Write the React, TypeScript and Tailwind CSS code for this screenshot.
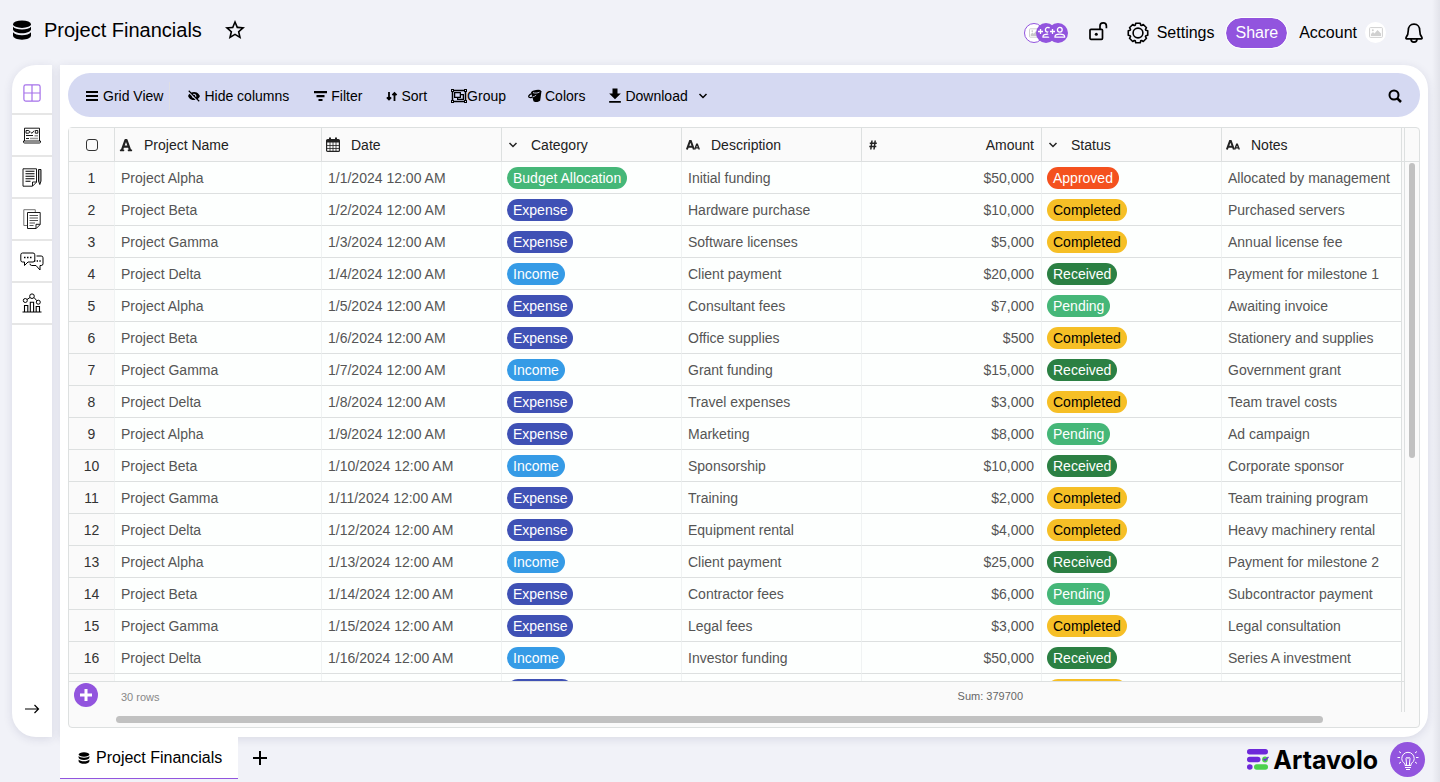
import type { ReactNode } from 'react'
import { BiSolidHide } from 'react-icons/bi'
import { FaFont, FaRegObjectGroup } from 'react-icons/fa'
import { MdDownload, MdStarOutline } from 'react-icons/md'

type Row = {
  project: string
  category: string
  description: string
  amount: string
  status: string
  notes: string
}

const projects = ['Project Alpha', 'Project Beta', 'Project Gamma', 'Project Delta']

const entries: [number, string, string, string, string, string][] = [
  [0, 'Budget Allocation', 'Initial funding', '$50,000', 'Approved', 'Allocated by management'],
  [1, 'Expense', 'Hardware purchase', '$10,000', 'Completed', 'Purchased servers'],
  [2, 'Expense', 'Software licenses', '$5,000', 'Completed', 'Annual license fee'],
  [3, 'Income', 'Client payment', '$20,000', 'Received', 'Payment for milestone 1'],
  [0, 'Expense', 'Consultant fees', '$7,000', 'Pending', 'Awaiting invoice'],
  [1, 'Expense', 'Office supplies', '$500', 'Completed', 'Stationery and supplies'],
  [2, 'Income', 'Grant funding', '$15,000', 'Received', 'Government grant'],
  [3, 'Expense', 'Travel expenses', '$3,000', 'Completed', 'Team travel costs'],
  [0, 'Expense', 'Marketing', '$8,000', 'Pending', 'Ad campaign'],
  [1, 'Income', 'Sponsorship', '$10,000', 'Received', 'Corporate sponsor'],
  [2, 'Expense', 'Training', '$2,000', 'Completed', 'Team training program'],
  [3, 'Expense', 'Equipment rental', '$4,000', 'Completed', 'Heavy machinery rental'],
  [0, 'Income', 'Client payment', '$25,000', 'Received', 'Payment for milestone 2'],
  [1, 'Expense', 'Contractor fees', '$6,000', 'Pending', 'Subcontractor payment'],
  [2, 'Expense', 'Legal fees', '$3,000', 'Completed', 'Legal consultation'],
  [3, 'Income', 'Investor funding', '$50,000', 'Received', 'Series A investment'],
  [0, 'Expense', '', '', 'Completed', ''],
]

const rows: Row[] = entries.map(([p, category, description, amount, status, notes]) => ({
  project: projects[p],
  category,
  description,
  amount,
  status,
  notes,
}))

const pillColors: Record<string, string> = {
  'Budget Allocation': 'bg-[#45b778] text-white',
  Expense: 'bg-[#3f51b5] text-white',
  Income: 'bg-[#359be6] text-white',
  Approved: 'bg-[#f4511e] text-white',
  Completed: 'bg-[#f6bf26] text-black',
  Received: 'bg-[#2b8043] text-white',
  Pending: 'bg-[#45b778] text-white',
}

function Pill({ label }: { label: string }) {
  return (
    <span className={`inline-block h-[22px] rounded-full px-1.5 leading-[22px] ${pillColors[label]}`}>
      {label}
    </span>
  )
}

function DatabaseIcon({ className }: { className: string }) {
  return (
    <svg viewBox="0 0 20 20" className={className} fill="currentColor">
      <ellipse cx="10" cy="4.200" rx="9" ry="3.700" />
      <path d="M1 6.700c1.500 1.800 4.800 2.700 9 2.700s7.500-.9 9-2.700v2.500c0 2.300-4 4-9 4s-9-1.700-9-4z" />
      <path d="M1 12.300c1.500 2 4.800 3 9 3s7.500-1 9-3v3.200c0 2.300-4 4.200-9 4.200s-9-1.900-9-4.200z" />
    </svg>
  )
}

function ChevronDown() {
  return (
    <svg viewBox="0 0 10 10" className="h-2.5 w-2.5" fill="none" stroke="currentColor" strokeWidth="1.5">
      <path d="M1.500 3 5 6.500 8.500 3" />
    </svg>
  )
}

function CalendarIcon() {
  return (
    <svg viewBox="0 0 14 15" className="h-[15px] w-[14px]" fill="none" stroke="currentColor">
      <rect x=".6" y="2.600" width="12.800" height="11.800" rx="1" strokeWidth="1.200" />
      <path d="M1 3h12v2.500H1z" fill="currentColor" stroke="none" />
      <path d="M1 8.500h12M1 11.500h12M4 5v9.500M7 5v9.500M10 5v9.500" strokeWidth=".8" />
      <path d="M4 1.300v2.500M10 1.300v2.500" strokeWidth="2" strokeLinecap="round" />
    </svg>
  )
}

function FontSizeIcon() {
  return (
    <svg viewBox="0 0 14 12" className="h-3 w-3.5" fill="none" stroke="currentColor">
      <path d="M.9 10.500 4 2h.8L7.900 10.500M2.300 7.800h4.200" strokeWidth="2" />
      <path d="M8.700 10.500 10.700 5.200h.6l2 5.300M9.700 8.900h2.700" strokeWidth="1.400" />
    </svg>
  )
}

function HashIcon() {
  return (
    <svg viewBox="0 0 8 10" className="h-2.5 w-2" fill="none" stroke="currentColor" strokeWidth="1.500">
      <path d="M3 .5 1.800 9.500M6.200.5 5 9.500M.8 3.200h7M.3 6.600h7" />
    </svg>
  )
}

function UnlockIcon() {
  return (
    <svg viewBox="0 0 20 20" className="h-5 w-5" fill="none" stroke="currentColor" strokeWidth="1.700">
      <rect x="2" y="8.300" width="12.500" height="10" rx="1" />
      <path d="M12 8V5a3.200 3.200 0 0 1 6.400 0v2.200" />
      <circle cx="8.300" cy="13.300" r="1.500" fill="currentColor" stroke="none" />
    </svg>
  )
}

const gearPath =
  Array.from({ length: 8 }, (_, i) => i * 45)
    .flatMap((a) => [[a - 13, 10], [a + 13, 10], [a + 19, 8.3], [a + 26, 8.3]])
    .map(([deg, r], i) => {
      const t = (deg * Math.PI) / 180
      return `${i ? 'L' : 'M'}${(11 + r * Math.cos(t)).toFixed(2)} ${(11 + r * Math.sin(t)).toFixed(2)}`
    })
    .join('') + 'Z'

function GearIcon() {
  return (
    <svg viewBox="0 0 22 22" className="h-[22px] w-[22px]" fill="none" stroke="currentColor" strokeWidth="1.600" strokeLinejoin="round">
      <path d={gearPath} />
      <circle cx="11" cy="11" r="4.900" />
    </svg>
  )
}

function BellIcon() {
  return (
    <svg viewBox="0 0 20 22" className="h-[22px] w-5" fill="none" stroke="currentColor" strokeWidth="1.700" strokeLinejoin="round">
      <path d="M10 2.200c-3.700 0-5.700 2.700-5.700 6 0 4.400-1 5.800-2.200 7.200-.5.700-.1 1.500.7 1.500h14.400c.8 0 1.200-.8.700-1.500-1.200-1.400-2.200-2.800-2.200-7.200 0-3.300-2-6-5.700-6z" />
      <path d="M7 17c0 2 1.200 3.200 3 3.200s3-1.200 3-3.200" />
    </svg>
  )
}

function BucketIcon() {
  return (
    <svg viewBox="0 0 14 14" className="h-3.5 w-3.5" fill="none">
      <path d="M3 3.200 13.500 2l-1.300 9.500c-.5 1.400-5.400 2.200-6.700.8z" fill="currentColor" />
      <ellipse cx="8.200" cy="3" rx="5" ry="2" fill="currentColor" transform="rotate(-8 8.200 3)" />
      <path d="M5 3.600c1.500.8 4.800.6 6.500-.5" stroke="#d5d9f2" strokeWidth=".9" />
      <path d="M3.700 4.600C.8 5.800.3 7.600 1.200 8.300c1.200.8 4-.3 6.500-2.300" stroke="currentColor" strokeWidth="1.300" />
      <path d="M4.500 8c1.500-.4 2.600-1 3.700-1.900" stroke="#d5d9f2" strokeWidth=".8" />
    </svg>
  )
}

function PersonAddIcon({ className }: { className: string }) {
  return (
    <svg viewBox="0 0 20 20" className={className} fill="none" stroke="white" strokeWidth="1.300">
      <circle cx="11.800" cy="6.800" r="2.400" />
      <path d="M7 14.200v-.8c0-1.700 2.800-2.300 4.800-2.300s4.800.6 4.800 2.300v.8zM2 8.500h5M4.500 6v5" />
    </svg>
  )
}

function ImageIcon({ className }: { className: string }) {
  return (
    <svg viewBox="0 0 14 11" className={className} fill="none" stroke="currentColor">
      <rect x=".6" y=".6" width="12.800" height="9.800" rx=".8" strokeWidth="1" />
      <path d="M2 9V7l2-2 1.500 1.500 3-3.500L12 6.500V9z" fill="currentColor" stroke="none" />
      <circle cx="3.800" cy="3.200" r="1" fill="currentColor" stroke="none" />
    </svg>
  )
}

const navItems: { label: string; icon: ReactNode }[] = [
  {
    label: 'Grid',
    icon: (
      <svg viewBox="0 0 18 18" className="h-[18px] w-[18px] text-[#a571ea]" fill="none" stroke="currentColor">
        <rect x=".9" y=".9" width="16.200" height="16.200" rx="1.800" strokeWidth="1.200" />
        <path d="M9 1v16M1 9h16" strokeWidth="1.200" />
      </svg>
    ),
  },
  {
    label: 'Forms',
    icon: (
      <svg viewBox="0 0 18 17" className="h-[17px] w-[18px]" fill="none" stroke="currentColor" strokeWidth=".9">
        <path d="M1.500 14V1.200h15V14M.5 14h17v1a1 1 0 0 1-1 1h-15a1 1 0 0 1-1-1z" />
        <path d="M3 3.500h2.200a1.300 1.300 0 0 1 0 2.700H3zM7.500 5 9 6.300l2-2.600M12.300 3.500h2.500v2.700h-2.500z" />
        <path d="M3 8.500h7M3 11.500h3" />
        <path d="M7 11.500h8M11.500 8.700H15" strokeWidth="1.500" stroke="#999" />
      </svg>
    ),
  },
  {
    label: 'Notes',
    icon: (
      <svg viewBox="0 0 20 19" className="h-[19px] w-5" fill="none" stroke="currentColor" strokeWidth=".9">
        <path d="M1 .8h13.500v13.400l-4 4H1zM10.500 18v-4h4" />
        <path d="M3.500 3.300h9M3.500 5.800h9M3.500 8.300h9M3.500 10.800h9M3.500 13.300h5" strokeWidth="1.100" />
        <path d="M16.500 1.500h2.500v11.500l-1.200 3.500-1.300-3.500z" fill="#aaa" />
      </svg>
    ),
  },
  {
    label: 'Documents',
    icon: (
      <svg viewBox="0 0 18 20" className="h-5 w-[18px]" fill="none" stroke="currentColor" strokeWidth=".9">
        <path d="M4 16.500H.8V.7h11.500V3" stroke="#666" />
        <path d="M4.500 3.500h12.700v12l-4 4H4.500zM13 19.300v-4h4" />
        <path d="M6.500 6.500h8.500M6.500 9h8.500M6.500 11.500h8.500M6.500 14h5.500M6.500 16.500h4" stroke="#555" strokeWidth="1.200" />
      </svg>
    ),
  },
  {
    label: 'Chat',
    icon: (
      <svg viewBox="0 0 24 19" className="h-[19px] w-6" fill="none" stroke="currentColor">
        <path d="M2.500 1h10.500a1.800 1.800 0 0 1 1.800 1.800v5.400A1.800 1.800 0 0 1 13 10H8l-3.500 3.500V10h-2A1.800 1.800 0 0 1 .8 8.200V2.800A1.800 1.800 0 0 1 2.500 1z" />
        <path d="M16.500 4h4.700A1.800 1.800 0 0 1 23 5.800v5.900a1.800 1.800 0 0 1-1.800 1.800H20V18l-4-4.500h-4.200a1.800 1.800 0 0 1-1.800-1.800" />
        <path d="M4 5.500h1.500M7 5.500h1.500M10 5.500h1.500M14 9h1.300M16.700 9H18M19.400 9h1.300" strokeWidth="1.600" />
      </svg>
    ),
  },
  {
    label: 'Charts',
    icon: (
      <svg viewBox="0 0 20 20" className="h-5 w-5" fill="none" stroke="currentColor">
        <path d="M.5 19h19M2.500 19v-6.500h3.300V19M8.300 19v-9.800h3.300V19M14.200 19v-5.500h3.300V19" strokeWidth="1.100" />
        <circle cx="3.300" cy="7.500" r="2" />
        <circle cx="10" cy="3.200" r="2.300" />
        <circle cx="16.300" cy="9.200" r="2" />
        <path d="m5 6.500 3-2M12 4.500l2.800 3.200" />
      </svg>
    ),
  },
]

function Header() {
  return (
    <header className="flex h-[65px] shrink-0 items-center justify-between pr-4 pl-3">
      <div className="flex items-center pb-1.5">
        <DatabaseIcon className="h-5 w-5" />
        <h1 className="ml-3 text-xl">Project Financials</h1>
        <button aria-label="Add to favorites" className="ml-[21px]">
          <MdStarOutline className="h-6 w-6" />
        </button>
      </div>
      <div className="flex items-center">
        <div className="mr-5 flex">
          <span className="flex h-5 w-5 items-center rounded-full border border-[#9254de] bg-white pl-1 text-[#c8c8c8]">
            <ImageIcon className="h-2.5 w-3" />
          </span>
          <span className="-ml-2 h-5 w-5 rounded-full bg-[#9254de]">
            <PersonAddIcon className="h-5 w-5" />
          </span>
          <span className="-ml-2 h-5 w-5 rounded-full bg-[#9254de]">
            <PersonAddIcon className="h-5 w-5" />
          </span>
        </div>
        <button aria-label="Unlock" className="mr-[19px] pb-1">
          <UnlockIcon />
        </button>
        <button className="mr-3 flex items-center gap-2">
          <GearIcon />
          Settings
        </button>
        <button className="mr-3 h-[30px] rounded-full bg-[#9254de] px-[9px] text-white outline outline-white">
          Share
        </button>
        <button className="mr-[18px] flex items-center gap-2">
          Account
          <span className="flex h-[21px] w-[21px] items-center justify-center rounded-full bg-white text-[#d0d0d0]">
            <ImageIcon className="h-[11px] w-3.5" />
          </span>
        </button>
        <button aria-label="Notifications">
          <BellIcon />
        </button>
      </div>
    </header>
  )
}

function Sidebar() {
  return (
    <nav className="mr-2 flex w-10 shrink-0 flex-col rounded-l-3xl bg-white shadow-[0_2px_10px_rgba(40,40,90,0.12)]">
      {navItems.map((item, i) => (
        <a
          key={item.label}
          href="#"
          aria-label={item.label}
          className={`flex items-center justify-center border-b-2 border-[#e6e6e6] ${i === 0 ? 'h-[50px] pt-2' : 'h-[42px]'}`}
        >
          {item.icon}
        </a>
      ))}
      <button aria-label="Expand" className="mt-auto mb-5 flex justify-center">
        <svg viewBox="0 0 16 16" className="h-4 w-4" fill="none" stroke="currentColor" strokeWidth="1.200">
          <path d="M1 8h13.500M10.500 4l4 4-4 4" />
        </svg>
      </button>
    </nav>
  )
}

function Toolbar() {
  return (
    <div className="mb-2.5 flex h-11 shrink-0 items-center rounded-full bg-[#d5d9f2] px-[18px] pt-0.5">
      <button className="flex h-7 items-center gap-[5px] border-r border-[#dedee4] pr-1.5">
        <svg viewBox="0 0 12 10" className="h-2.5 w-3" fill="currentColor">
          <path d="M0 0h12v2H0zM0 4h12v2H0zM0 8h12v2H0z" />
        </svg>
        Grid View
      </button>
      <button className="ml-[17px] flex items-center gap-[3px]">
        <BiSolidHide className="h-3.5 w-3.5" />
        Hide columns
      </button>
      <button className="ml-[25px] flex items-center gap-1">
        <svg viewBox="0 0 13 10" className="h-2.5 w-[13px]" fill="currentColor">
          <path d="M0 0h13v2.200H0zM2.500 4h8v2.200h-8zM4.500 8h4v2h-4z" />
        </svg>
        Filter
      </button>
      <button className="ml-6 flex items-center gap-[3px]">
        <svg viewBox="0 0 12 12" className="h-3 w-3" fill="none" stroke="currentColor" strokeWidth="1.800">
          <path d="M3 2v7.500M.9 7.300 3 9.500l2.100-2.200M8.500 11V3M6.400 5.200 8.500 3l2.100 2.200" />
        </svg>
        Sort
      </button>
      <button className="ml-6 flex items-center">
        <FaRegObjectGroup className="h-4 w-4" />
        Group
      </button>
      <button className="ml-[22px] flex items-center gap-[3px]">
        <BucketIcon />
        Colors
      </button>
      <button className="ml-5 flex items-center">
        <MdDownload className="h-5 w-5" />
        Download
        <span className="ml-2.5">
          <ChevronDown />
        </span>
      </button>
      <button aria-label="Search" className="ml-auto">
        <svg viewBox="0 0 14 14" className="h-3.5 w-3.5" fill="none" stroke="currentColor" strokeWidth="2">
          <circle cx="6" cy="6" r="4.500" />
          <path d="m9.300 9.300 3.700 3.700" strokeWidth="2.500" />
        </svg>
      </button>
    </div>
  )
}

const columns: { name: string; icon: ReactNode; iconClass: string; width: string }[] = [
  { name: 'Project Name', icon: <FaFont className="h-3.5 w-3.5" />, iconClass: 'w-6', width: 'w-[207px]' },
  { name: 'Date', icon: <CalendarIcon />, iconClass: 'w-6', width: 'w-[180px]' },
  { name: 'Category', icon: <ChevronDown />, iconClass: 'w-6 pl-0.5', width: 'w-[180px]' },
  { name: 'Description', icon: <FontSizeIcon />, iconClass: 'w-6', width: 'w-[180px]' },
  { name: 'Amount', icon: <HashIcon />, iconClass: 'w-6 pl-[3px]', width: 'w-[180px]' },
  { name: 'Status', icon: <ChevronDown />, iconClass: 'w-6 pl-0.5', width: 'w-[180px]' },
  { name: 'Notes', icon: <FontSizeIcon />, iconClass: 'w-6', width: '' },
]

const cell = 'border-r border-b border-r-[#f0f3f3] border-b-[#dde0e0] p-0 pl-1.5'

function DataTable() {
  return (
    <table className="w-full table-fixed border-separate border-spacing-0 text-left whitespace-nowrap">
      <colgroup>
        <col className="w-[46px]" />
        {columns.map((c) => (
          <col key={c.name} className={c.width} />
        ))}
      </colgroup>
      <thead>
        <tr className="h-[34px] bg-[#fafafa] text-[#222]">
          <th className="border-r border-b border-[#dde0e0] p-0 font-normal">
            <input
              type="checkbox"
              aria-label="Select all rows"
              className="mx-auto block h-3 w-3 appearance-none rounded-[3px] border border-[#333]"
            />
          </th>
          {columns.map((c) => (
            <th key={c.name} className="border-r border-b border-[#dde0e0] p-0 font-normal">
              <div className="flex items-center pr-[7px] pl-1">
                <span className={c.iconClass}>{c.icon}</span>
                <span className={c.name === 'Amount' ? 'ml-auto' : 'ml-px'}>{c.name}</span>
              </div>
            </th>
          ))}
        </tr>
      </thead>
      <tbody className="bg-[#fdfffe] text-[#555]">
        {rows.map((row, i) => (
          <tr key={i} className="h-8">
            <td className="border-r border-b border-r-[#f0f3f3] border-b-[#dde0e0] bg-[#fafafa] p-0 text-center text-[#333]">
              {i + 1}
            </td>
            <td className={cell}>{row.project}</td>
            <td className={cell}>1/{i + 1}/2024 12:00 AM</td>
            <td className="border-r border-b border-r-[#f0f3f3] border-b-[#dde0e0] p-0 pl-[5px]">
              <Pill label={row.category} />
            </td>
            <td className={cell}>{row.description}</td>
            <td className="border-r border-b border-r-[#f0f3f3] border-b-[#dde0e0] p-0 pr-[7px] text-right">
              {row.amount}
            </td>
            <td className="border-r border-b border-r-[#f0f3f3] border-b-[#dde0e0] p-0 pl-[5px]">
              <Pill label={row.status} />
            </td>
            <td className="border-r border-b border-[#dde0e0] p-0 pl-1.5">{row.notes}</td>
          </tr>
        ))}
      </tbody>
    </table>
  )
}

function DataGrid() {
  return (
    <div className="flex min-h-0 flex-1 flex-col rounded border border-[#dde0e0] bg-[#fafafa]">
      <div className="flex min-h-0 flex-1">
        <div className="flex min-w-0 flex-1 flex-col">
          <div className="flex min-h-0 flex-1 border-b border-[#dde0e0]">
            <div className="min-w-0 flex-1 overflow-hidden">
              <DataTable />
            </div>
            <div className="w-[3px] border-r border-[#dde0e0]">
              <div className="h-[34px] border-b border-[#dde0e0]" />
            </div>
          </div>
          {/* Summary row */}
          <div className="flex h-[30px] shrink-0 text-[11px] text-[#666]">
            <div className="w-[46px] pt-px pl-[5px]">
              <button
                aria-label="Add row"
                className="flex h-6 w-6 items-center justify-center rounded-full bg-[#9254de] text-white"
              >
                <svg viewBox="0 0 12 12" className="h-3 w-3" stroke="currentColor" strokeWidth="3">
                  <path d="M6 0v12M0 6h12" />
                </svg>
              </button>
            </div>
            <div className="w-[747px] pt-2 pl-1.5 text-[#888]">30 rows</div>
            <div className="w-[180px] pt-[7px] pr-[19px] text-right">Sum: 379700</div>
            <div className="flex-1 border-r border-[#dde0e0]" />
            <div className="w-[3px] border-r border-[#dde0e0]" />
          </div>
        </div>
        <div className="w-3.5 shrink-0">
          <div className="h-[34px] border-b border-[#dde0e0]" />
          <div className="mt-px ml-1 h-[295px] w-1.5 rounded-full bg-[#c1c1c1]" />
        </div>
      </div>
      <div className="h-[15px] shrink-0 pt-1 pr-24 pl-[47px]">
        <div className="h-[7px] rounded-full bg-[#c1c1c1]" />
      </div>
    </div>
  )
}

function Logo() {
  return (
    <div className="flex items-center gap-1">
      <svg viewBox="0 0 22 21" className="h-[21px] w-[22px]" fill="none">
        <rect x="0" y="0" width="21" height="5.500" rx="2.700" fill="#6d28d9" />
        <rect x="0" y="7.700" width="13.500" height="5.500" rx="2.700" fill="#6d28d9" />
        <circle cx="18" cy="10.500" r="2.900" fill="#4cd14c" />
        <path d="m16.500 9.800 1.600 1.500L21.500 8" stroke="#6d28d9" strokeWidth="1.200" />
        <circle cx="2.800" cy="18" r="2.800" fill="#6d28d9" />
        <rect x="7" y="15.300" width="14" height="5.500" rx="2.700" fill="#4cd14c" />
      </svg>
      <span className="font-[Inter,sans-serif] text-[25px] leading-7 font-bold">Artavolo</span>
    </div>
  )
}

function BottomBar() {
  return (
    <footer className="flex h-[45px] shrink-0 justify-between pr-[15px] pl-[60px]">
      <div className="flex items-start">
        <a href="#" className="flex h-[42px] items-center gap-1.5 border-b border-[#9254de] bg-white px-4 pl-[18px]">
          <DatabaseIcon className="h-3 w-3" />
          Project Financials
        </a>
        <button aria-label="Add table" className="ml-[15px] flex h-[42px] items-center">
          <svg viewBox="0 0 14 14" className="h-3.5 w-3.5" stroke="currentColor" strokeWidth="2">
            <path d="M7 0v14M0 7h14" />
          </svg>
        </button>
      </div>
      <div className="flex items-center gap-3">
        <Logo />
        <button
          aria-label="Ideas"
          className="flex h-[35px] w-[35px] items-center justify-center rounded-full bg-[#9254de] text-white"
        >
          <svg viewBox="0 0 22 22" className="h-[22px] w-[22px]" fill="none" stroke="currentColor" strokeWidth="1">
            <path d="M8 16.500v-1.800c-2-1.200-3.200-3-3.200-5.200a6.200 6.200 0 0 1 12.400 0c0 2.200-1.200 4-3.200 5.200v1.800zM8 18.500h6M9 20.500h4" />
            <path d="M9.700 16.500 9 9.500a1 1 0 0 1 2 0 1 1 0 0 1 2 0l-.7 7" />
            <path d="M.5 8.500h2.500M19 8.500h2.500M2 2.500l2 1.500M20 2.500l-2 1.500M2 14.500 4 13M20 14.500 18 13" />
          </svg>
        </button>
      </div>
    </footer>
  )
}

export default function App() {
  return (
    <div className="relative flex h-screen flex-col overflow-hidden bg-[#f1f2f8] font-['Liberation_Sans',Arial,sans-serif] text-base text-black">
      <Header />
      <div className="flex min-h-0 flex-1 px-3">
        <Sidebar />
        <main className="flex min-w-0 flex-1 flex-col rounded-r-3xl bg-white p-2 pb-[9px] text-sm shadow-[0_2px_10px_rgba(40,40,90,0.12)]">
          <Toolbar />
          <DataGrid />
        </main>
      </div>
      <BottomBar />
      {/* Edge shadow of the collapsed drawer */}
      <div className="pointer-events-none absolute inset-y-0 right-0 w-2 bg-linear-to-r from-transparent to-[#e2e3ea]" />
    </div>
  )
}
